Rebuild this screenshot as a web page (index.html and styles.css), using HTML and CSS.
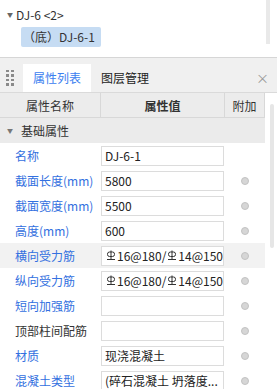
FILE: index.html
```html
<!DOCTYPE html>
<html lang="zh">
<head>
<meta charset="utf-8">
<link rel="stylesheet" href="styles.css">
</head>
<body>
<div class="tree">
  <div class="tree-body">
    <div class="tree-node"><span class="caret">▼</span><span>DJ-6 &lt;2&gt;</span></div>
    <div class="tree-child"><span class="sel">（底）DJ-6-1</span></div>
  </div>
  <div class="tree-scroll"></div>
</div>
<div class="panel">
  <div class="tabbar">
    <div class="grip"><i></i><i></i><i></i><i></i><i></i><i></i><i></i><i></i></div>
    <div class="tab active">属性列表</div>
    <div class="tab">图层管理</div>
    <div class="close">×</div>
  </div>
  <div class="grid-wrap">
    <div class="grid">
      <div class="row head">
        <div class="c-name">属性名称</div>
        <div class="c-val">属性值</div>
        <div class="c-add">附加</div>
      </div>
      <div class="row group"><span class="gcaret">▼</span>基础属性</div>
      <div class="row"><div class="c-name blue">名称</div><div class="c-val"><div class="box">DJ-6-1</div></div><div class="c-add"></div></div>
      <div class="row"><div class="c-name blue">截面长度(mm)</div><div class="c-val"><div class="box">5800</div></div><div class="c-add"><span class="dot"></span></div></div>
      <div class="row"><div class="c-name blue">截面宽度(mm)</div><div class="c-val"><div class="box">5500</div></div><div class="c-add"><span class="dot"></span></div></div>
      <div class="row"><div class="c-name blue">高度(mm)</div><div class="c-val"><div class="box">600</div></div><div class="c-add"><span class="dot"></span></div></div>
      <div class="row hl"><div class="c-name blue">横向受力筋</div><div class="c-val"><div class="box clip"><svg class="rb" viewBox="0 0 10 11"><rect x="1.5" y="2" width="7" height="4.5" rx="2" fill="none" stroke="#333" stroke-width="1"/><path d="M5 0.5V9.5M1 9.5H9" stroke="#333" stroke-width="1" fill="none"/></svg>16@180/<svg class="rb" viewBox="0 0 10 11"><rect x="1.5" y="2" width="7" height="4.5" rx="2" fill="none" stroke="#333" stroke-width="1"/><path d="M5 0.5V9.5M1 9.5H9" stroke="#333" stroke-width="1" fill="none"/></svg>14@150</div></div><div class="c-add"><span class="dot"></span></div></div>
      <div class="row"><div class="c-name blue">纵向受力筋</div><div class="c-val"><div class="box clip"><svg class="rb" viewBox="0 0 10 11"><rect x="1.5" y="2" width="7" height="4.5" rx="2" fill="none" stroke="#333" stroke-width="1"/><path d="M5 0.5V9.5M1 9.5H9" stroke="#333" stroke-width="1" fill="none"/></svg>16@180/<svg class="rb" viewBox="0 0 10 11"><rect x="1.5" y="2" width="7" height="4.5" rx="2" fill="none" stroke="#333" stroke-width="1"/><path d="M5 0.5V9.5M1 9.5H9" stroke="#333" stroke-width="1" fill="none"/></svg>14@150</div></div><div class="c-add"><span class="dot"></span></div></div>
      <div class="row"><div class="c-name blue">短向加强筋</div><div class="c-val"><div class="box"></div></div><div class="c-add"><span class="dot"></span></div></div>
      <div class="row"><div class="c-name">顶部柱间配筋</div><div class="c-val"><div class="box"></div></div><div class="c-add"><span class="dot"></span></div></div>
      <div class="row"><div class="c-name blue">材质</div><div class="c-val"><div class="box">现浇混凝土</div></div><div class="c-add"><span class="dot"></span></div></div>
      <div class="row"><div class="c-name blue">混凝土类型</div><div class="c-val"><div class="box">(碎石混凝土 坍落度...</div></div><div class="c-add"><span class="dot"></span></div></div>
    </div>
    <div class="side"><div class="thumb"></div></div>
  </div>
</div>
</body>
</html>
```

FILE: styles.css
```css
* { box-sizing: border-box; }
html, body { margin: 0; padding: 0; background: #fff; }
body {
  font-family: "Noto Sans CJK SC", "Noto Sans", sans-serif;
  font-size: 12px;
  color: #333;
  width: 277px;
  height: 389px;
  overflow: hidden;
}
.tree {
  height: 58px;
  display: flex;
  border-bottom: 1px solid #d6d6d6;
}
.tree-body { flex: 1; padding-top: 5px; }
.tree-node { height: 20px; line-height: 20px; display: flex; align-items: center; }
.caret { font-size: 6px; color: #666; width: 16px; padding-left: 7px; }
.tree-child { padding-left: 21px; margin-top: 2px; }
.sel {
  display: inline-block;
  height: 20px;
  line-height: 20px;
  padding: 0 3px 0 2px;
  background: #c6dcf3;
  border-radius: 2px;
  width: 80px;
}
.tree-scroll {
  width: 4px;
  height: 44px;
  background: #e9e9e9;
  margin-right: 7px;
}
.panel { background: #f0f0f0; }
.tabbar {
  height: 35px;
  display: flex;
  align-items: flex-end;
  border-bottom: 1px solid #dadada;
}
.grip {
  width: 23px;
  height: 28px;
  display: grid;
  grid-template-columns: 3px 3px;
  grid-auto-rows: 3px;
  column-gap: 2px;
  row-gap: 1.5px;
  align-content: center;
  padding-left: 6px;
}
.grip i { background: #8a8a8a; display: block; width: 3px; height: 2.5px; }
.tab {
  height: 28px;
  line-height: 28px;
  padding: 0 10px;
  color: #222;
}
.tab.active { background: #fff; color: #3b80f0; width: 68px; }
.close {
  margin-left: auto;
  height: 28px;
  line-height: 28px;
  margin-right: 8px;
  color: #999;
  font-size: 13px;
}
.grid-wrap { display: flex; background: #fff; }
.grid { width: 265px; }
.side { flex: 1; background: #fff; }
.thumb {
  width: 4px;
  height: 144px;
  background: #e6e6e6;
  margin: 11px 0 0 5px;
  border-radius: 2px;
}
.row {
  height: 25px;
  display: flex;
  align-items: center;
}
.row.head {
  background: #ececec;
  border-bottom: 1px solid #d8d8d8;
}
.row.head > div {
  height: 100%;
  display: flex;
  align-items: center;
  justify-content: center;
  border-right: 1px solid #d8d8d8;
}
.row.head .c-val { font-weight: bold; }
.c-name { width: 101px; padding-left: 15px; white-space: nowrap; }
.row.head .c-name { padding-left: 0; }
.c-val { width: 124px; }
.c-add { width: 40px; display: flex; justify-content: center; }
.row.group { background: #ebebeb; }
.gcaret { font-size: 6px; color: #777; width: 21px; padding-left: 7px; }
.row.hl { background: #f2f2f2; }
.blue { color: #3370e0; }
.box {
  width: 123px;
  height: 20px;
  line-height: 18px;
  border: 1px solid #dcdcdc;
  background: #fff;
  padding-left: 3px;
  white-space: nowrap;
  overflow: hidden;
  color: #222;
}
.rb { width: 10px; height: 11px; vertical-align: 0; margin: 0 1px 0 1px; }
.dot {
  width: 8px;
  height: 8px;
  border-radius: 50%;
  background: #d6d6d6;
  border: 1px solid #c2c2c2;
}
```
